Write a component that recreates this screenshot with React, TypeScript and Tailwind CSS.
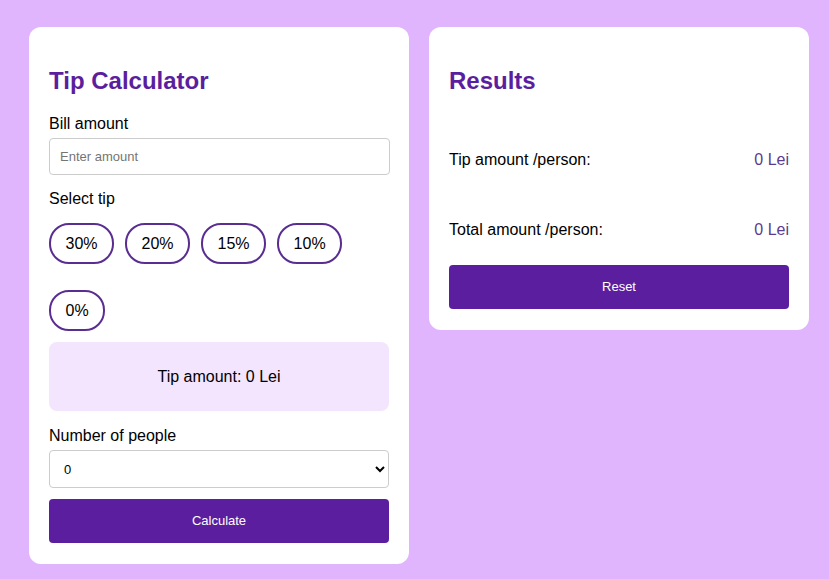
import { useState } from "react";

const tips = ["30%", "20%", "15%", "10%", "0%"];

export default function App() {
  const [people, setPeople] = useState("0");

  return (
    <div className="min-h-[579px] w-full bg-[#e0b5fd] pl-[29px] pt-[27px] font-['Liberation_Sans',Arial,sans-serif] text-black">
      <div className="flex items-start gap-5">
        <div className="w-[380px] rounded-xl bg-white px-5 pb-[21px] pt-5">
          <h2 className="mt-5 mb-5 text-2xl font-bold leading-[28px] text-[#5b1e9e]">Tip Calculator</h2>
          <label className="block text-base leading-[18px]">Bill amount</label>
          <input
            placeholder="Enter amount"
            className="mt-[5px] block h-[37px] w-[341px] rounded border border-[#cccccc] px-[10px] text-[13px] placeholder:text-[#757575]"
          />
          <div className="mt-[15px] text-base leading-[18px]">Select tip</div>
          <div className="mt-[15px] flex flex-wrap gap-x-[11px] gap-y-[26px]">
            {tips.map((t) => (
              <button
                key={t}
                className="h-[41px] rounded-[20px] border-2 border-[#5a2d91] bg-white px-[14.5px] text-base"
              >
                {t}
              </button>
            ))}
          </div>
          <div className="mt-[11px] flex h-[69px] items-center justify-center rounded-lg bg-[#f3e5fd] text-base">
            Tip amount: 0 Lei
          </div>
          <label className="mt-4 block text-base leading-[18px]">Number of people</label>
          <select
            value={people}
            onChange={(e) => setPeople(e.target.value)}
            className="mt-[5px] block h-[38px] w-full rounded border border-[#cccccc] bg-white px-[10px] text-[13px]"
          >
            {[0, 1, 2, 3, 4, 5].map((n) => (
              <option key={n} value={n}>
                {n}
              </option>
            ))}
          </select>
          <button className="mt-[11px] block h-[44px] w-full rounded bg-[#5b1e9e] text-[13px] font-medium text-white">
            Calculate
          </button>
        </div>

        <div className="w-[380px] rounded-xl bg-white px-5 pb-[21px] pt-5">
          <h2 className="mt-5 text-2xl font-bold leading-[28px] text-[#5b1e9e]">Results</h2>
          <div className="mt-[56px] flex justify-between text-base leading-[18px]">
            <span>Tip amount /person:</span>
            <span className="text-[#5c3b8f]">0 Lei</span>
          </div>
          <div className="mt-[52px] flex justify-between text-base leading-[18px]">
            <span>Total amount /person:</span>
            <span className="text-[#5c3b8f]">0 Lei</span>
          </div>
          <button className="mt-[26px] block h-[44px] w-full rounded bg-[#5b1e9e] text-[13px] font-medium text-white">
            Reset
          </button>
        </div>
      </div>
    </div>
  );
}
